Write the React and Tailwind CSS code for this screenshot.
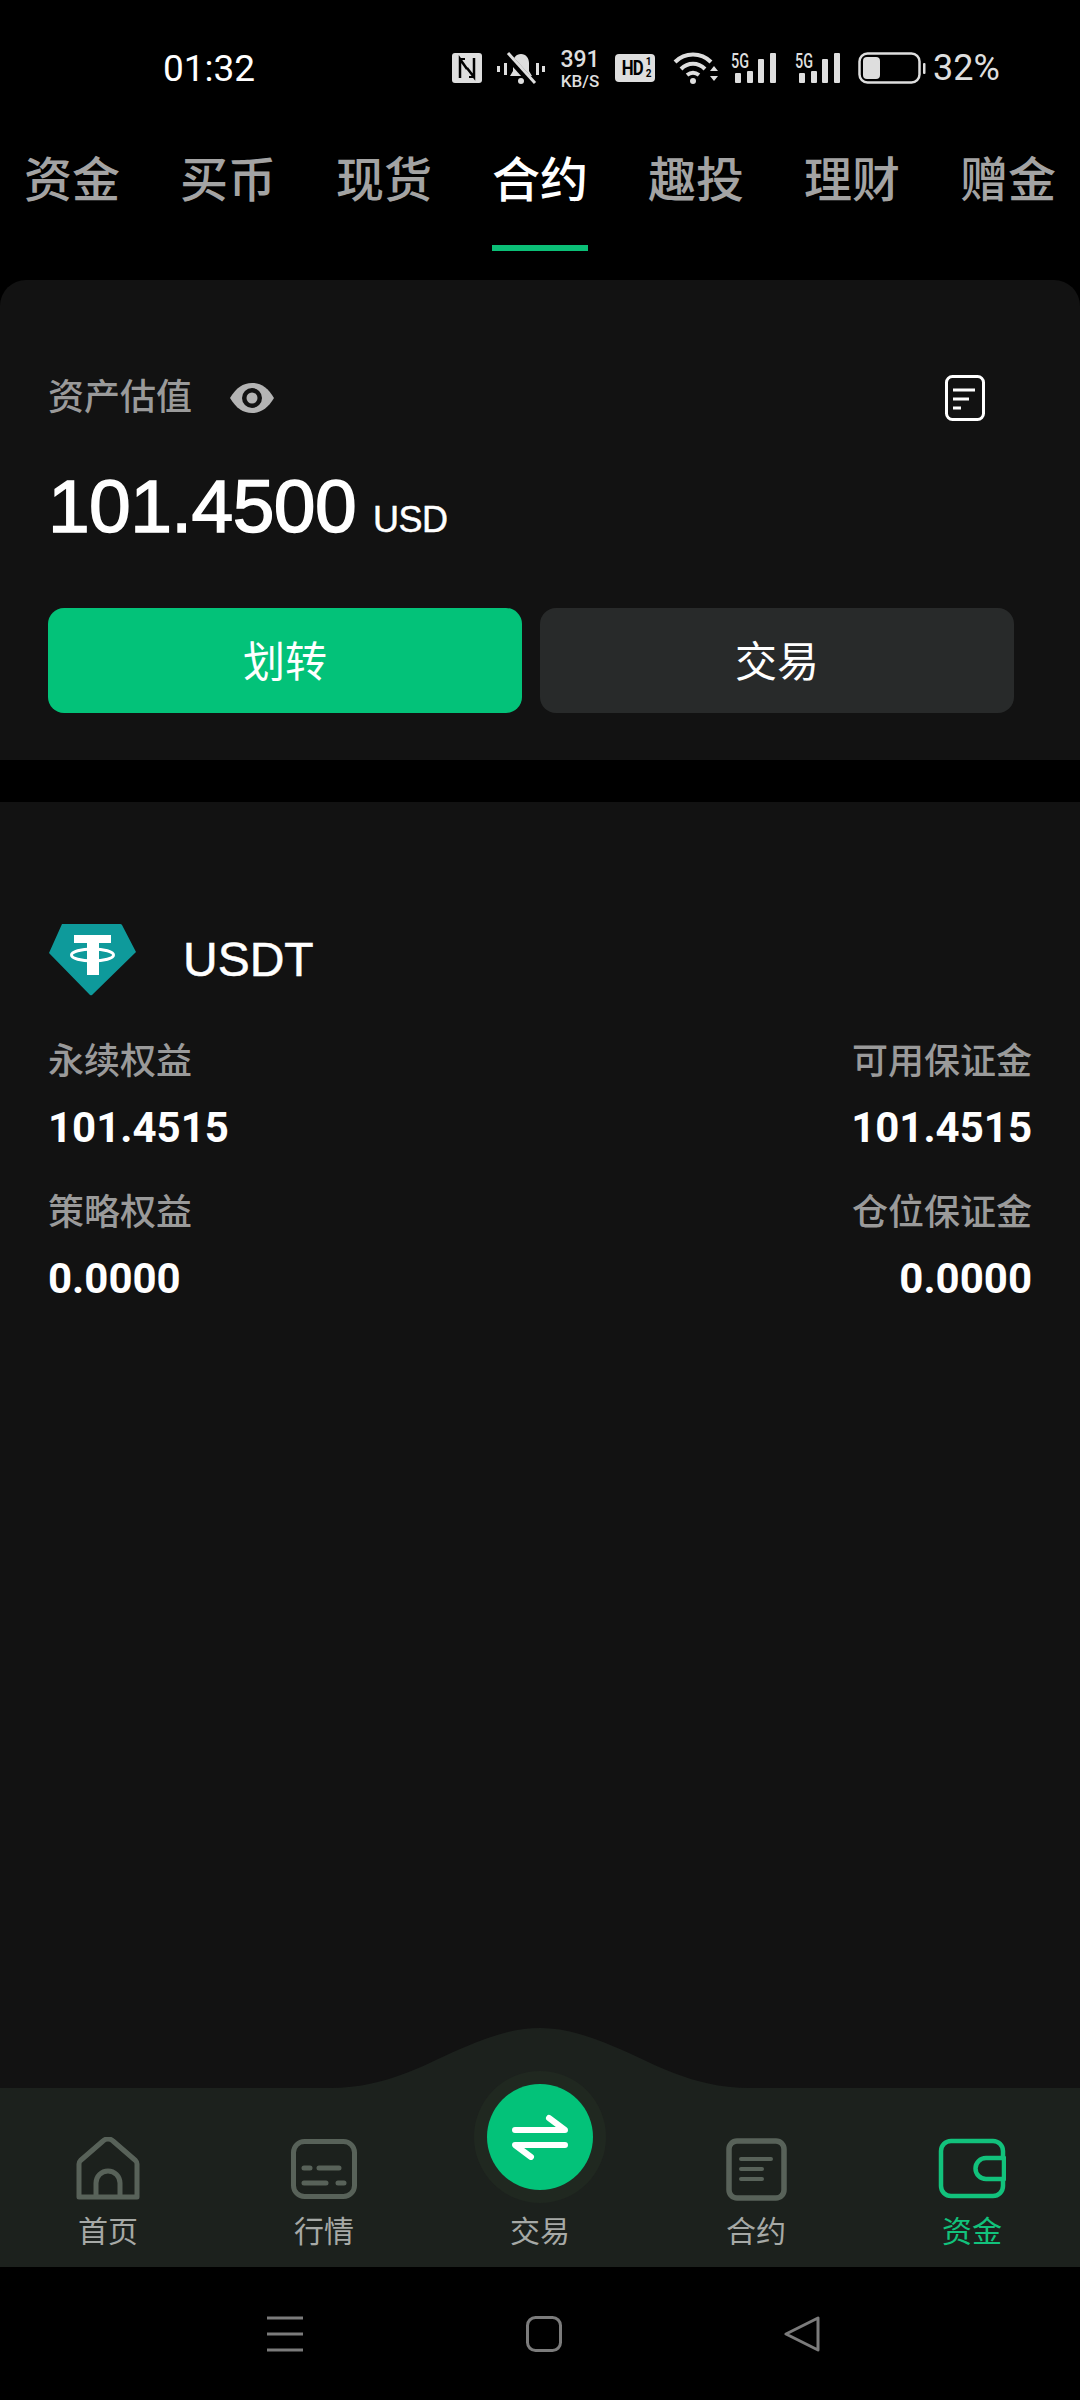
import React from "react";

const tabs = ["资金", "买币", "现货", "合约", "趣投", "理财", "赠金"];

const stats = [
  { left: "永续权益", leftValue: "101.4515", right: "可用保证金", rightValue: "101.4515" },
  { left: "策略权益", leftValue: "0.0000", right: "仓位保证金", rightValue: "0.0000" },
];

function SignalIcon({ className }) {
  return (
    <div className={`relative h-[30px] w-[46px] ${className}`}>
      <span className="absolute left-0 top-[-2px] origin-left text-[20px] font-medium leading-[20px] text-[#dedede] [transform:scaleX(0.72)]">5G</span>
      <svg width="46" height="30" viewBox="0 0 46 30" fill="#dedede">
        <rect x="4" y="20" width="6" height="10" rx="1" />
        <rect x="16" y="18" width="6" height="12" rx="1" />
        <rect x="27" y="6" width="6" height="24" rx="1" />
        <rect x="39" y="0" width="6" height="30" rx="1" />
      </svg>
    </div>
  );
}

function StatusBar() {
  return (
    <div className="flex h-[110px] items-center pl-[163px] pt-[26px] text-[#dedede]">
      <span className="w-[289px] text-[37px] leading-none text-white">01:32</span>
      <svg width="30" height="30" viewBox="0 0 30 30" className="mr-[15px]">
        <rect width="30" height="30" rx="3" fill="#dedede" />
        <path d="M8 25V6l7 10M22 5v19l-7-9" fill="none" stroke="#000" strokeWidth="2.500" />
        <path d="M7 6h6M17 24h6" stroke="#000" strokeWidth="2" />
      </svg>
      <svg width="48" height="34" viewBox="0 0 48 34" className="mr-[15px]" fill="#dedede">
        <path d="M24 3c5 0 8 4 8 9v8l3 5H13l3-5v-8c0-5 3-9 8-9z" />
        <circle cx="24" cy="30" r="3" />
        <path d="M9 3l27 30" stroke="#000" strokeWidth="7" />
        <path d="M11 2l27 30" stroke="#dedede" strokeWidth="3" />
        <rect x="0" y="15" width="3" height="6" />
        <rect x="7" y="12" width="3" height="12" />
        <rect x="39" y="12" width="3" height="12" />
        <rect x="45" y="15" width="3" height="6" />
      </svg>
      <div className="mr-[15px] flex h-[36px] w-[40px] flex-col items-center justify-center leading-none">
        <span className="text-[23px] font-medium leading-[25px]">391</span>
        <span className="text-[17px] font-medium leading-[18px]">KB/S</span>
      </div>
      <div className="mr-[18px] flex h-[28px] w-[40px] items-center justify-center rounded-[4px] bg-[#dedede] text-[21px] font-bold leading-none tracking-[-1px] text-black">
        <span className="[transform:scaleX(0.8)]">HD</span>
        <span className="flex flex-col text-[10px] leading-[12px]">
          <span>1</span>
          <span>2</span>
        </span>
      </div>
      <svg width="46" height="34" viewBox="0 0 46 34" className="mr-[12px]" fill="none" stroke="#dedede" strokeWidth="4">
        <path d="M2 11c10-10 26-10 36 0" />
        <path d="M8 18c7-7 17-7 24 0" />
        <path d="M14 24c4-3 8-3 12 0" />
        <circle cx="20" cy="30" r="3" fill="#dedede" stroke="none" />
        <path d="M37 20h8l-4-5zM37 25h8l-4 5z" fill="#dedede" stroke="none" />
      </svg>
      <SignalIcon className="mr-[18px]" />
      <SignalIcon className="mr-[17px]" />
      <svg width="68" height="32" viewBox="0 0 68 32" className="mr-[7px]">
        <rect x="1.500" y="1.500" width="60" height="29" rx="8" fill="none" stroke="#dedede" strokeWidth="2.500" />
        <rect x="5" y="5" width="17" height="22" rx="4" fill="#dedede" />
        <rect x="65" y="11" width="2.500" height="11" rx="1" fill="#dedede" />
      </svg>
      <span className="text-[36px] font-normal leading-none">32%</span>
    </div>
  );
}

function Tabs() {
  return (
    <div className="flex h-[141px] justify-between px-[24px]">
      {tabs.map((t) => (
        <div key={t} className="flex w-[96px] flex-col items-center">
          <div className={`flex flex-1 items-center whitespace-nowrap pt-[6px] text-[48px] font-medium leading-none ${t === "合约" ? "text-white" : "text-[#a3a3a3]"}`}>
            {t}
          </div>
          <div className={`h-[6px] w-[96px] shrink-0 ${t === "合约" ? "bg-[#0bbf77]" : "bg-transparent"}`} />
        </div>
      ))}
    </div>
  );
}

function TetherLogo() {
  return (
    <svg width="90" height="74" viewBox="0 0 90 74" className="-mt-[2px]">
      <path d="M14 2h58a2 2 0 0 1 2 1l14 27-44 43a2 2 0 0 1-2 0L1 31z" fill="#0e9a9b" />
      <rect x="26" y="13" width="37" height="8" fill="#fff" />
      <rect x="39" y="20" width="12" height="33" fill="#fff" />
      <ellipse cx="44.500" cy="33" rx="21" ry="6" fill="none" stroke="#fff" strokeWidth="3" />
    </svg>
  );
}

function Summary() {
  return (
    <section className="flex h-[480px] flex-col rounded-t-[26px] bg-[#121212] px-[48px] pt-[95px]">
      <div className="flex h-[46px] items-center">
        <span className="text-[36px] font-medium leading-none text-[#9a9a9a]">资产估值</span>
        <svg width="44" height="30" viewBox="0 0 44 30" className="ml-[38px]">
          <path d="M0 15C6 5 13 0 22 0s16 5 22 15c-6 10-13 15-22 15S6 25 0 15z" fill="#b4b4b4" />
          <circle cx="22" cy="15" r="10" fill="#121212" />
          <circle cx="22" cy="15" r="5.500" fill="#b4b4b4" />
        </svg>
        <svg width="40" height="46" viewBox="0 0 40 46" className="ml-auto mr-[47px]" fill="none" stroke="#fff">
          <rect x="1.500" y="1.500" width="37" height="43" rx="6" strokeWidth="3" />
          <path d="M8 15h22M8 24h16M8 33h8" strokeWidth="3" />
        </svg>
      </div>
      <div className="mt-[43px] flex items-baseline font-['Liberation_Sans',sans-serif] text-white">
        <span className="text-[75px] leading-[84px] tracking-[-0.6px] [-webkit-text-stroke:1.500px_white]">101.4500</span>
        <span className="ml-[17px] text-[36px] leading-none tracking-[-0.5px] [-webkit-text-stroke:0.5px_white]">USD</span>
      </div>
      <div className="mt-[60px] flex gap-[18px]">
        <button className="h-[105px] w-[474px] rounded-[16px] bg-[#03c279] pt-[4px] text-[42px] leading-none text-white">划转</button>
        <button className="h-[105px] w-[474px] rounded-[16px] bg-[#282a2a] pt-[4px] text-[42px] leading-none text-white">交易</button>
      </div>
    </section>
  );
}

function AccountCard() {
  return (
    <section className="flex-1 bg-[#121212] px-[48px] pt-[120px]">
      <div className="flex h-[76px] items-center">
        <TetherLogo />
        <span className="ml-[45px] font-['Liberation_Sans',sans-serif] text-[48px] leading-none text-white [-webkit-text-stroke:0.5px_white]">USDT</span>
      </div>
      <div className="mt-[42px] flex flex-col gap-[39px]">
        {stats.map((s) => (
          <div key={s.left} className="flex justify-between">
            <div className="flex flex-col gap-[20px]">
              <span className="text-[36px] font-medium leading-[44px] text-[#9a9a9a]">{s.left}</span>
              <span className="text-[42px] font-bold leading-[48px] text-white">{s.leftValue}</span>
            </div>
            <div className="flex flex-col items-end gap-[20px]">
              <span className="text-[36px] font-medium leading-[44px] text-[#9a9a9a]">{s.right}</span>
              <span className="text-[42px] font-bold leading-[48px] text-white">{s.rightValue}</span>
            </div>
          </div>
        ))}
      </div>
    </section>
  );
}

const grey = "#586259";

function NavItem({ label, active, children }) {
  return (
    <div className="flex flex-col items-center">
      <div className="flex h-[64px] items-center justify-center">{children}</div>
      <span className={`mt-[13px] text-[30px] leading-[36px] ${active ? "text-[#12c27c]" : "text-[#a6a9a6]"}`}>{label}</span>
    </div>
  );
}

function BottomNav() {
  return (
    <nav className="relative h-[179px] bg-[#1c211d] pt-[49px]">
      <svg width="420" height="62" viewBox="0 0 420 62" className="absolute left-[330px] top-[-60px]" fill="#1c211d">
        <path d="M0 60C60 60 100 33 135 19 160 8 185 0 210 0s50 8 75 19c35 14 75 41 135 41v2H0z" />
      </svg>
      <div className="absolute left-1/2 top-[-17px] flex h-[132px] w-[132px] -translate-x-1/2 items-center justify-center rounded-full bg-[#202820]">
        <div className="flex h-[106px] w-[106px] items-center justify-center rounded-full bg-[#03c279]">
          <svg width="56" height="46" viewBox="0 0 56 46" fill="none" stroke="#fff" strokeWidth="6" strokeLinecap="round" strokeLinejoin="round">
            <path d="M3 16h50L37 4" />
            <path d="M53 31H3l16 12" />
          </svg>
        </div>
      </div>
      <div className="relative grid grid-cols-5">
        <NavItem label="首页">
          <svg width="64" height="64" viewBox="0 0 64 64" fill="none" stroke={grey} strokeWidth="5" strokeLinejoin="round">
            <path d="M3 60V27a5 5 0 0 1 1.500-3.500L27 4a7 7 0 0 1 10 0l22.500 19.500A5 5 0 0 1 61 27v33z" />
            <path d="M20 60V46a12 12 0 0 1 24 0v14" />
          </svg>
        </NavItem>
        <NavItem label="行情">
          <svg width="66" height="60" viewBox="0 0 66 60" fill="none" stroke={grey}>
            <rect x="2.500" y="2.500" width="61" height="55" rx="11" strokeWidth="5" />
            <path d="M13 30h6M28 30h20M13 45h22M47 45h6" strokeWidth="5" strokeLinecap="round" transform="translate(0 -1)" />
          </svg>
        </NavItem>
        <NavItem label="交易">
          <div className="h-[64px] w-[64px]" />
        </NavItem>
        <NavItem label="合约">
          <svg width="61" height="63" viewBox="0 0 61 63" fill="none" stroke={grey}>
            <rect x="3" y="3" width="55" height="57" rx="8" strokeWidth="5.500" />
            <path d="M15 21h30M15 31h21M15 41h21" strokeWidth="4" strokeLinecap="round" />
          </svg>
        </NavItem>
        <NavItem label="资金" active>
          <svg width="68" height="62" viewBox="0 0 68 62" fill="none" stroke="#12c27c" strokeWidth="4.500" strokeLinejoin="round">
            <path d="M65 20V13A10 10 0 0 0 55 3H13A10 10 0 0 0 3 13V48A10 10 0 0 0 13 58H55A10 10 0 0 0 65 48V41" />
            <path d="M66 20H48A10.500 10.500 0 0 0 48 41H66z" />
          </svg>
        </NavItem>
      </div>
    </nav>
  );
}

function SystemNav() {
  return (
    <div className="flex h-[133px] items-start bg-black pl-[267px] pt-[49px]">
      <svg width="36" height="36" viewBox="0 0 36 36" stroke="#7b7b7b" strokeWidth="3">
        <path d="M0 2h36M0 18h36M0 34h36" />
      </svg>
      <svg width="36" height="36" viewBox="0 0 36 36" className="ml-[223px]" fill="none" stroke="#7b7b7b" strokeWidth="3">
        <rect x="1.500" y="1.500" width="33" height="33" rx="8" />
      </svg>
      <svg width="36" height="36" viewBox="0 0 36 36" className="ml-[222px]" fill="none" stroke="#7b7b7b" strokeWidth="3" strokeLinejoin="round">
        <path d="M2 18L34 2V34z" />
      </svg>
    </div>
  );
}

export default function App() {
  return (
    <div className="flex h-[2400px] w-[1080px] flex-col overflow-hidden bg-black font-['Roboto','Noto_Sans_CJK_SC',sans-serif]">
      <StatusBar />
      <Tabs />
      <div className="mt-[29px]">
        <Summary />
      </div>
      <div className="mt-[42px] flex flex-1 flex-col">
        <AccountCard />
      </div>
      <BottomNav />
      <SystemNav />
    </div>
  );
}
